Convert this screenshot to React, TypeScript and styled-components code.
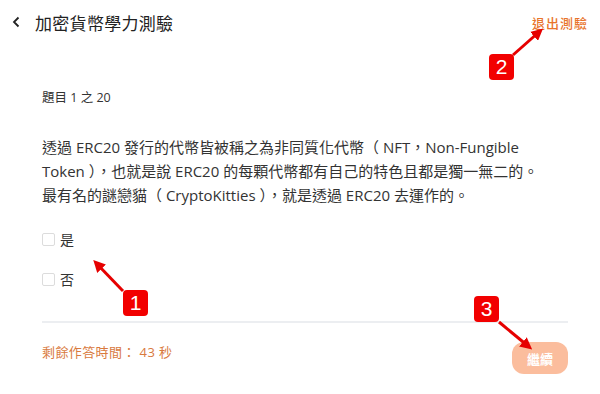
import React, { useState } from "react";
import styled, { createGlobalStyle } from "styled-components";

const GlobalStyle = createGlobalStyle`
  html, body {
    margin: 0;
    padding: 0;
    background: #fff;
  }
  body {
    font-family: "Open Sans", "Noto Sans CJK TC", sans-serif;
    color: #333;
  }
`;

const Page = styled.div`
  position: relative;
  width: 600px;
  height: 394px;
  overflow: hidden;
  background: #fff;
`;

const Header = styled.header`
  height: 44px;
  display: flex;
  align-items: center;
  padding: 0 12px 0 12px;
`;

const BackButton = styled.button`
  border: none;
  background: none;
  padding: 0;
  width: 14px;
  height: 20px;
  display: flex;
  align-items: center;
  cursor: pointer;
`;

const Title = styled.h1`
  margin: 0 0 0 9px;
  font-size: 17px;
  font-weight: 400;
  color: #222;
  letter-spacing: 0.3px;
`;

const ExitLink = styled.a`
  margin-left: auto;
  font-size: 13px;
  font-weight: 500;
  letter-spacing: 1px;
  color: #e8742c;
  text-decoration: none;
`;

const Content = styled.main`
  padding: 0 32px 0 42px;
`;

const QuestionCount = styled.div`
  margin-top: 45px;
  font-size: 12.5px;
  line-height: 18px;
  color: #333;
`;

const QuestionText = styled.p`
  margin: 28px 0 0;
  font-size: 15px;
  line-height: 24px;
  color: #333;
  white-space: nowrap;
`;

const Options = styled.div`
  margin-top: 12px;
  display: flex;
  flex-direction: column;
`;

const OptionRow = styled.label`
  height: 40px;
  display: flex;
  align-items: center;
  gap: 5px;
  font-size: 14px;
  color: #333;
  cursor: pointer;
`;

const Box = styled.span<{ $checked: boolean }>`
  width: 11px;
  height: 11px;
  border: 1px solid #dcdcdc;
  border-radius: 2px;
  background: ${(p) => (p.$checked ? "#f08a4b" : "#fff")};
`;

const Divider = styled.hr`
  margin: 22px 0 0;
  border: none;
  height: 2px;
  background: #eceef1;
`;

const Footer = styled.footer`
  display: flex;
  justify-content: space-between;
  align-items: flex-start;
  margin-top: 19px;
`;

const Timer = styled.div`
  font-size: 13px;
  line-height: 20px;
  color: #d97a3e;
  letter-spacing: 0.4px;
`;

const NextButton = styled.button`
  width: 56px;
  height: 32px;
  border: none;
  border-radius: 12px;
  background: #fbbd9d;
  color: #fff;
  font-family: inherit;
  font-size: 13px;
  font-weight: 700;
`;

const Badge = styled.div<{ $x: number; $y: number }>`
  position: absolute;
  left: ${(p) => p.$x}px;
  top: ${(p) => p.$y}px;
  width: 25px;
  height: 26px;
  border-radius: 4px;
  background: #f20000;
  color: #fff;
  font-family: "Liberation Sans", Arial, sans-serif;
  font-size: 21px;
  line-height: 26px;
  text-align: center;
`;

const Overlay = styled.svg`
  position: absolute;
  left: 0;
  top: 0;
  pointer-events: none;
`;

const arrows = [
  { x1: 123, y1: 291, x2: 97, y2: 264 },
  { x1: 513, y1: 55, x2: 539, y2: 32 },
  { x1: 499, y1: 322, x2: 528, y2: 346 },
];

export default function App() {
  const [answer, setAnswer] = useState<string | null>(null);

  return (
    <Page>
      <GlobalStyle />
      <Header>
        <BackButton aria-label="返回">
          <svg width="8" height="12" viewBox="0 0 8 12">
            <path d="M6.5 1.5 2 6l4.5 4.5" fill="none" stroke="#222" strokeWidth="1.8" />
          </svg>
        </BackButton>
        <Title>加密貨幣學力測驗</Title>
        <ExitLink href="#">退出測驗</ExitLink>
      </Header>
      <Content>
        <QuestionCount>題目 1 之 20</QuestionCount>
        <QuestionText>
          透過 ERC20 發行的代幣皆被稱之為非同質化代幣（ NFT，Non-Fungible
          <br />
          Token ），也就是說 ERC20 的每顆代幣都有自己的特色且都是獨一無二的。
          <br />
          最有名的謎戀貓（ CryptoKitties ），就是透過 ERC20 去運作的。
        </QuestionText>
        <Options>
          {["是", "否"].map((o) => (
            <OptionRow key={o} onClick={() => setAnswer(o)}>
              <Box $checked={answer === o} />
              {o}
            </OptionRow>
          ))}
        </Options>
        <Divider />
        <Footer>
          <Timer>剩餘作答時間： 43 秒</Timer>
          <NextButton disabled={!answer}>繼續</NextButton>
        </Footer>
      </Content>

      <Overlay width="600" height="394">
        <defs>
          <marker id="head" markerWidth="4" markerHeight="4" refX="2.2" refY="2" orient="auto">
            <path d="M0 0 4 2 0 4z" fill="#e60000" />
          </marker>
        </defs>
        {arrows.map((a, i) => (
          <line
            key={i}
            x1={a.x1}
            y1={a.y1}
            x2={a.x2}
            y2={a.y2}
            stroke="#e60000"
            strokeWidth="3"
            markerEnd="url(#head)"
          />
        ))}
      </Overlay>
      <Badge $x={123} $y={290}>1</Badge>
      <Badge $x={489} $y={54}>2</Badge>
      <Badge $x={474} $y={296}>3</Badge>
    </Page>
  );
}
